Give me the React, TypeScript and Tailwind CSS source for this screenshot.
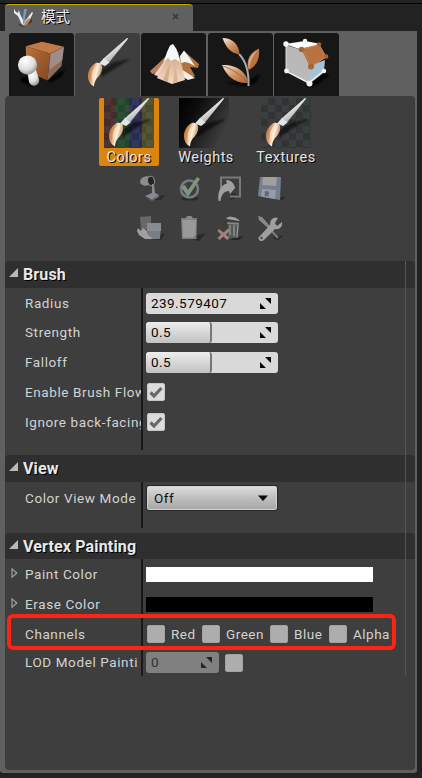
import type { ReactNode } from "react";

function SharedGradients() {
  return (
    <svg className="absolute h-0 w-0" aria-hidden="true">
      <defs>
        <linearGradient id="bristle" x1="0" y1="0.3" x2="1" y2="0.7">
          <stop offset="0" stopColor="#b5713f" />
          <stop offset="0.3" stopColor="#d79b68" />
          <stop offset="0.55" stopColor="#fff0dc" />
          <stop offset="1" stopColor="#a7683a" />
        </linearGradient>
        <linearGradient id="handle" x1="0.3" y1="0.3" x2="0.6" y2="0.7">
          <stop offset="0" stopColor="#ffffff" />
          <stop offset="1" stopColor="#b4b4b4" />
        </linearGradient>
        <linearGradient id="copper" x1="0" y1="0" x2="1" y2="1">
          <stop offset="0" stopColor="#b8733f" />
          <stop offset="1" stopColor="#85461d" />
        </linearGradient>
        <linearGradient id="leaf" x1="0" y1="0" x2="1" y2="1">
          <stop offset="0" stopColor="#fff0df" />
          <stop offset="0.5" stopColor="#cf9468" />
          <stop offset="1" stopColor="#a8622f" />
        </linearGradient>
        <radialGradient id="ball" cx="0.4" cy="0.3" r="0.75">
          <stop offset="0" stopColor="#ffffff" />
          <stop offset="0.6" stopColor="#dedede" />
          <stop offset="1" stopColor="#8e8e8e" />
        </radialGradient>
        <linearGradient id="sand" x1="0" y1="0" x2="0" y2="1">
          <stop offset="0" stopColor="#c99a78" />
          <stop offset="1" stopColor="#f4dcc4" />
        </linearGradient>
        <filter id="soft" x="-30%" y="-30%" width="160%" height="160%">
          <feGaussianBlur stdDeviation="1.2" />
        </filter>
        <pattern id="checker" width="14" height="14" patternUnits="userSpaceOnUse">
          <path d="M0 0h7v7H0zM7 7h7v7H7z" fill="#ffffff" fillOpacity="0.05" />
        </pattern>
        <linearGradient id="weight" x1="0" y1="0" x2="1" y2="0.5">
          <stop offset="0" stopColor="#000000" />
          <stop offset="0.35" stopColor="#0c0c0c" />
          <stop offset="1" stopColor="#3e3e3e" />
        </linearGradient>
      </defs>
    </svg>
  );
}

function BrushDrawing() {
  return (
    <g>
      <path d="M16 33 L29 25 L45 21 L46 22 L31 31 L19 39 Z" fill="#000" opacity="0.55" filter="url(#soft)" />
      <path d="M44 0 L45.3 0.6 L26 24.5 L20.5 20.5 Z" fill="url(#handle)" />
      <path d="M21 20 L26.5 24.5 L22 28 L16 25.5 Z" fill="#e2e5e6" />
      <path d="M14 24.5 C8 27 4.5 33 5 39 C5.5 44 8 47 11 48.5 C11 44 13 41 16 38 C19.5 34 20 29 18 26 Z" fill="url(#bristle)" />
      <path d="M13 28 C8.500 32 8 37 9.500 43 C11 38 16 34 15.500 29 Z" fill="#ffefd9" opacity="0.6" />
    </g>
  );
}

function ModeTab({ active, children, className = "" }: { active?: boolean; children: ReactNode; className?: string }) {
  return (
    <button
      className={`h-[63px] w-[65px] shrink-0 overflow-hidden rounded-t-[3px] ${active ? "bg-[#3e3e3e]" : "bg-[#171717]"} ${className}`}
    >
      {children}
    </button>
  );
}

function ModeTabs() {
  return (
    <div className="flex h-[65px] gap-px pt-[2px] pl-[9px]">
      <ModeTab>
        <svg width="65" height="63" viewBox="9 33 65 63">
          <path d="M48 80 L65 69 L62 76 L50 83 Z M20 78 L36 76 L32 86 L22 82 Z" fill="#000" filter="url(#soft)" />
          <path d="M25.7 46.3 L42 41.7 L64 46.7 L50 53.5 Z" fill="#c07a47" />
          <path d="M25.7 46.3 L50 53.5 L47.5 80.5 L26.5 71 Z" fill="url(#copper)" />
          <path d="M50 53.5 L64 46.7 L61.5 66 L47.5 80.5 Z" fill="#8d6a58" />
          <path d="M50.5 54 L64 47 L62.3 60 L49.5 70 Z" fill="#aba2a8" opacity="0.6" />
          <path d="M27 70 L36 70 L39 79 A5 5 0 0 1 29 82 Z" fill="url(#ball)" />
          <circle cx="27.500" cy="65" r="9.600" fill="url(#ball)" />
        </svg>
      </ModeTab>
      <ModeTab active>
        <svg width="65" height="63" viewBox="-8 -5 65 63">
          <BrushDrawing />
        </svg>
      </ModeTab>
      <ModeTab>
        <svg width="65" height="63" viewBox="141 33 65 63">
          <path d="M150 71 L160 62 L165 57 L170 67 L160 77 L158 73 L152 74 Z" fill="#b98058" />
          <path d="M178 60 L184 51 L199 64 L198 68 L190 67 L195 76 L186 79 L176 72 Z" fill="#b0743f" />
          <path d="M184 50.5 L189 57 L195 66 L189 63 L185 62 L181 63 L180 56 Z" fill="#eef3f5" />
          <path d="M181 69 L195 78 L188 80 L182 76 Z" fill="#efefef" />
          <path d="M166 55 L172 46 L178 52 L182 66 L185 80 L172 84 L157 78 Z" fill="url(#sand)" />
          <path d="M173 44 L176.500 49 L180 62 L175 59 L171 61 L168 58 L164 62 L167 52 L170 45.500 Z" fill="#f4f9fb" />
          <path d="M164 62 L166 61 L158 76 L154 75 Z" fill="#f0cfd0" />
          <path d="M170 63 L168 82 L163 80 Z" fill="#d4ab8d" />
          <path d="M175 62 L178 82 L173 83 Z" fill="#dcb699" />
        </svg>
      </ModeTab>
      <ModeTab className="ml-px">
        <svg width="65" height="63" viewBox="208 33 65 63">
          <path d="M225 83 L246 82 L261 74 L255 83 L244 86 Z" fill="#000" filter="url(#soft)" />
          <path d="M239 54 C246 61 249 72 248.5 86" fill="none" stroke="#a7abaf" strokeWidth="2" />
          <path d="M222.5 38 C232 38 239 44 239.5 54.5 C231 53 226 48 222.5 38 Z" fill="url(#leaf)" />
          <path d="M259 48.5 C249 53 246 61 248.5 70 C257 66 260 58 259 48.5 Z" fill="#b97442" />
          <path d="M258 50 C252 56 250 63 249 69 C247 61 250 54 258 50 Z" fill="#dfab82" />
          <path d="M222 65 C234 64 246 70 248.5 83 C236 84 227 77 222 65 Z" fill="url(#leaf)" />
          <path d="M223 66 C234 70 241 75 247 82" fill="none" stroke="#a66437" strokeWidth="1" />
        </svg>
      </ModeTab>
      <ModeTab>
        <svg width="65" height="63" viewBox="274 33 65 63">
          <path d="M306 86 L326 73 L329 76 L313 87 Z" fill="#000" filter="url(#soft)" />
          <path d="M285 44 L305 41 L321 44 L302 50 Z" fill="#ffffff" />
          <path d="M286 45 L302 50 L310 66 L309 83 L286 70 Z" fill="#b9b9b9" />
          <path d="M309 66 L325 60 L324 71 L309 83 Z" fill="#a5c3d4" />
          <path d="M286 71 L309 83 L324 71" fill="none" stroke="#ececec" strokeWidth="1.8" />
          <path d="M286 45 V71" fill="none" stroke="#dcdcdc" strokeWidth="1" />
          <path d="M302 49 L319 45 L326 57 L311 66 Z" fill="#b97240" stroke="#c5814f" strokeWidth="1.3" />
          <g fill="#f4f4f4">
            <circle cx="286" cy="44" r="2.700" />
            <circle cx="305" cy="41" r="2.200" />
            <circle cx="286.500" cy="71" r="2.400" />
            <circle cx="309.500" cy="83.500" r="3" />
            <circle cx="324" cy="71" r="2.200" />
          </g>
          <g fill="#aa6334">
            <circle cx="301.500" cy="49.500" r="2.800" />
            <circle cx="319" cy="44.500" r="2.200" />
            <circle cx="326" cy="56.500" r="2.300" />
            <circle cx="311" cy="66.500" r="3" />
          </g>
        </svg>
      </ModeTab>
    </div>
  );
}

function PaintMode({ label, selected, children, className = "", labelClass = "" }: { label: string; selected?: boolean; children: ReactNode; className?: string; labelClass?: string }) {
  return (
    <button className={`flex h-[68px] w-[60px] shrink-0 flex-col items-center rounded-[2px] ${selected ? "bg-[#dc850e]" : ""} ${className}`}>
      <svg width="50" height="50" viewBox="0 0 50 50" className="shrink-0">
        {children}
        <BrushDrawing />
      </svg>
      <span className={`pt-px text-[14.5px] leading-[18px] tracking-[0.5px] whitespace-nowrap text-[#e4e4e4] [text-shadow:1px_1px_0_#000] ${labelClass}`}>{label}</span>
    </button>
  );
}

function ActionIcon({ children }: { children: ReactNode }) {
  return (
    <button className="h-[40px] w-[40px]">
      <svg width="40" height="40" viewBox="0 0 40 40">
        {children}
      </svg>
    </button>
  );
}

function PaintActions() {
  return (
    <div className="grid w-[160px] grid-cols-4 content-start">
      <ActionIcon>
        <path d="M20 29 L35 27 L31 32 L25 32 Z" fill="#2c2c2c" />
        <ellipse cx="16" cy="13" rx="6" ry="4.600" fill="#8d8d8d" transform="rotate(-12 16 13)" />
        <ellipse cx="21" cy="13" rx="3.500" ry="4.800" fill="#242424" stroke="#858585" strokeWidth="1.2" transform="rotate(-12 21 13)" />
        <path d="M22 16 H24 L25 25 L29 27 L22 31.500 L15 28 L22 25 Z" fill="#88898f" />
        <path d="M15 28 L22 31.500 L29 27 V29 L22 33 Z" fill="#686d80" />
      </ActionIcon>
      <ActionIcon>
        <ellipse cx="20" cy="30.500" rx="9" ry="2" fill="#292929" />
        <circle cx="19.500" cy="21" r="8.500" fill="none" stroke="#777b80" strokeWidth="2.6" />
        <path d="M11 19 L15 17 L18 22 L27 9 L30 11 L18 29 Z" fill="#81947f" />
      </ActionIcon>
      <ActionIcon>
        <path d="M22 25 L31 28 L20 32 Z" fill="#282828" />
        <path d="M11 21 V9.500 H30 V28.500 H20" fill="none" stroke="#777b7d" strokeWidth="2" />
        <path d="M8.500 33 C7.500 25 10 17 17 15.500 L16 12 C21 12 24 15 25 20 L20 26 L19 23 C14 23 11 27 10.500 33 Z" fill="#a0a0a0" />
      </ActionIcon>
      <ActionIcon>
        <path d="M28 31 L35 28 L33 32 Z" fill="#282828" />
        <path d="M10 9 H31 L30 32 L8 28 Z" fill="#777e92" />
        <path d="M13 9 H27 L26 18 L12 17 Z" fill="#a0a0a0" />
        <path d="M12 21 L26 22 L25 31 L11 28.500 Z" fill="#989ca5" />
        <path d="M15 23 L19 23.500 L18.500 28.500 L14.500 28 Z" fill="#606984" />
      </ActionIcon>
      <ActionIcon>
        <path d="M27 28 L35 25 L31 32 L21 31 Z" fill="#2a2a2a" />
        <path d="M10 9 L21 8 V20 L11 23 Z" fill="#686868" />
        <path d="M17 15 H31 L30 31 H18 Z" fill="#797d85" />
        <path d="M17 15 H31 V23 H17 Z" fill="#888c92" />
        <path d="M8 20 L11 23 L13 20 L17 23 L18 27 L23 31 H15 L9 27 L7 23 Z" fill="#a0a0a0" />
      </ActionIcon>
      <ActionIcon>
        <path d="M25 28 L36 25 L29 33 L22 31 Z" fill="#292929" />
        <path d="M11 10 H27 L26.500 31 H12 Z" fill="#7c7d7c" />
        <path d="M12.500 12 H26 L25.500 27 L23 29.500 H13 Z" fill="#989998" />
        <path d="M16 10 C16 7 22.500 7 22.500 10 V11.500 H16 Z" fill="#888" />
      </ActionIcon>
      <ActionIcon>
        <path d="M24 30 L34 28 L29 32 L20 32 Z" fill="#242424" />
        <path d="M18 14 L29 14 L28 30 H18 Z" fill="#565956" />
        <path d="M16 10 L20 8.500 L25 9.500 L29.500 12 L29 13 L17 11 Z" fill="#a0a0a0" />
        <path d="M17 15 L29 16" stroke="#888" strokeWidth="1.5" />
        <path d="M20 17 V27 M24 17 V28 M28 17 L27 29" stroke="#939693" strokeWidth="1.3" />
        <path d="M9 21 L13.500 24.500 L18 20.500 L20 22.500 L16 26.500 L19.500 30 L17 32 L13.500 28.500 L9.500 32 L7.500 30 L11 26.500 L7.500 23 Z" fill="#a47f7d" />
      </ActionIcon>
      <ActionIcon>
        <path d="M22 30 L34 27 L28 32 Z" fill="#292929" />
        <path d="M8 8 L12 9 L20 18 L18 20 L9 12 Z" fill="#858a91" />
        <path d="M20 21 L28 30" stroke="#7b7b7b" strokeWidth="2" />
        <path d="M9 29 L20 17 C20 11 24 8 28 10 L25 15 L27 18 L32 14 C33 19 29 22 25 21 L14 32 C11 35 7 31 9 29 Z" fill="#9e9f9e" />
        <circle cx="11.500" cy="30" r="1.2" fill="#444" />
      </ActionIcon>
    </div>
  );
}

function SectionHeader({ title, className = "h-[27px]" }: { title: string; className?: string }) {
  return (
    <div className={`flex items-center rounded-t-[4px] bg-[#2f2f2f] pl-1 ${className}`}>
      <svg width="9" height="9" viewBox="0 0 9 9" className="-mt-[4px]">
        <path d="M9 0 V9 H0 Z" fill="#b9b9b9" />
      </svg>
      <h2 className="ml-[5px] pt-px text-[16px] leading-5 font-bold tracking-[0.15px] text-[#e8e8e8] [text-shadow:1px_1px_0_#000]">{title}</h2>
    </div>
  );
}

function Row({ label, children, expandable, height = "h-[30px]", labelPad = "pt-px" }: { label: string; children: ReactNode; expandable?: boolean; height?: string; labelPad?: string }) {
  return (
    <div className={`flex ${height}`}>
      <div className="flex w-[136px] shrink-0 items-center overflow-hidden">
        <span className="w-5 shrink-0 pl-[6px]">
          {expandable && (
            <svg width="7" height="10" viewBox="0 0 7 10" className="-mt-[3px]">
              <path d="M1 0.800 L5.800 5 L1 9.200 Z" fill="none" stroke="#a5a5a5" strokeWidth="1.1" />
            </svg>
          )}
        </span>
        <span className={`text-[13.5px] tracking-[0.6px] whitespace-nowrap text-[#d2d2d2] ${labelPad}`}>{label}</span>
      </div>
      <div className="flex min-w-0 flex-1 items-center border-l-2 border-[#191919] pl-[3px]">{children}</div>
    </div>
  );
}

function SpinBox({ value, filled, disabled }: { value: string; filled?: boolean; disabled?: boolean }) {
  return (
    <div className={`flex h-[21px] items-center overflow-hidden rounded-[3px] ${disabled ? "w-[73px] bg-[#808080] text-[#333]" : "w-[132px] bg-[#d9d9d9] text-[#080808]"}`}>
      <div
        className={`flex h-full shrink-0 items-center pl-[5px] ${disabled ? "w-[55px]" : "w-[66px]"} ${filled ? "rounded-[3px] border-r-2 border-[#777] bg-linear-to-b from-[#ededed] to-[#c2c2c2]" : ""}`}
      >
        <span className={`text-[13.5px] tracking-[0.45px] ${filled || disabled ? "" : "pt-px"}`}>{value}</span>
      </div>
      <svg width="11" height="11" viewBox="0 0 11 11" className={disabled ? "shrink-0" : "ml-[48px] shrink-0"}>
        <path d="M5 0 H11 V6 Z M0 5 L6 11 H0 Z" fill={disabled ? "#252525" : "#080808"} />
      </svg>
    </div>
  );
}

function Check({ checked, className = "" }: { checked?: boolean; className?: string }) {
  return (
    <span className={`flex h-[18px] w-[18px] shrink-0 items-center justify-center rounded-[2px] border ${checked ? "border-[#c5c5c5] bg-[#dcdcdc]" : "border-[#a2a2a2] bg-[#adadad]"} ${className}`}>
      {checked && (
        <svg width="14" height="13" viewBox="0 0 14 13">
          <path d="M1.500 6.500 L5 10 L12.500 2" fill="none" stroke="#686868" strokeWidth="3.2" />
        </svg>
      )}
    </span>
  );
}

function Spacer({ height }: { height: string }) {
  return <div className={`ml-[136px] border-l-2 border-[#191919] ${height}`} />;
}

function Channel({ name, width }: { name: string; width: string }) {
  return (
    <label className={`flex shrink-0 items-center ${width}`}>
      <Check />
      <span className="ml-[6px] pt-px text-[13.5px] tracking-[0.5px] text-[#d2d2d2]">{name}</span>
    </label>
  );
}

export default function App() {
  return (
    <div className="relative flex h-[778px] w-[422px] flex-col overflow-hidden bg-[#222] font-['Roboto','Noto_Sans_CJK_SC',sans-serif]">
      <SharedGradients />
      <div className="h-1 shrink-0 border-b border-black" />
      <div className="ml-[5px] flex h-[27px] w-[188px] shrink-0 items-center rounded-t-[4px] border-t border-[#c9a900] bg-[#606060] pl-[8px]">
        <svg width="21" height="20" viewBox="13 7 21 20">
          <path d="M18 24 L32 18 L32 21 L24 26 Z" fill="#252525" opacity="0.65" />
          <path d="M14 8 L14 12 L18 15 L22 24 L25 23 L20 13 L19 9 L18 12 L16 11 Z" fill="#e6edf2" />
          <path d="M24 8 L27 8 L25 17 L27 22 L23 23 L23 16 Z" fill="#719bc0" />
          <path d="M32 11 L33 12 L30 18 L26 24 L23 25 L26 19 Z" fill="#edf1f4" />
          <path d="M29 17 L31 18 L27 24 L23 25 L26 20 Z" fill="#c58552" />
        </svg>
        <span className="ml-[7px] text-[14.5px] leading-5 text-[#f0f0f0] [text-shadow:1px_1px_0_#000]">模式</span>
        <svg width="7" height="7" viewBox="0 0 7 7" className="mr-[14px] ml-auto -mt-[3px]">
          <path d="M1 1 L6 6 M6 1 L1 6" stroke="#383838" strokeWidth="1.7" />
        </svg>
      </div>
      <main className="flex h-[742px] w-[417px] shrink-0 flex-col rounded-b-[3px] bg-[#606060]">
        <ModeTabs />
        <div className="relative ml-[5px] h-[674px] w-[410px] rounded-[4px] bg-[#3e3e3e]">
          <div className="flex pt-[2px] pl-[94px]">
            <PaintMode label="Colors" selected>
              <path d="M0 0h12v50H0z" fill="#462b2b" />
              <path d="M12 0h13v50H12z" fill="#23452b" />
              <path d="M25 0h13v50H25z" fill="#2a2b52" />
              <path d="M38 0h12v50H38z" fill="#4c4c2c" />
              <path d="M0 0h50v50H0z" fill="url(#checker)" />
            </PaintMode>
            <PaintMode label="Weights" className="ml-[15px]" labelClass="pl-1">
              <path d="M0 0h50v50H0z" fill="url(#weight)" />
            </PaintMode>
            <PaintMode label="Textures" className="ml-[22px]">
              <path d="M0 0h50v50H0z" fill="#303435" />
              <path d="M0 0h50v50H0z" fill="url(#checker)" />
            </PaintMode>
          </div>
          <div className="flex h-[95px] pt-[2px] pl-[125px]">
            <PaintActions />
          </div>
          <section>
            <SectionHeader title="Brush" />
            <Row label="Radius"><SpinBox value="239.579407" /></Row>
            <Row label="Strength" height="h-[29px]" labelPad="pb-px"><SpinBox value="0.5" filled /></Row>
            <Row label="Falloff"><SpinBox value="0.5" filled /></Row>
            <Row label="Enable Brush Flow"><Check checked className="ml-px" /></Row>
            <Row label="Ignore back-facing"><Check checked className="ml-px" /></Row>
            <Spacer height="h-[13px]" />
          </section>
          <section className="mt-[5px]">
            <SectionHeader title="View" />
            <Row label="Color View Mode" height="h-[32px]">
              <div className="flex h-[26px] w-[132px] items-center rounded-[3px] border border-[#272727] bg-linear-to-b from-[#dedede] via-[#bebebe] to-[#a7a7a7] pr-[9px] pl-[7px] text-[13.5px] tracking-[0.45px] text-[#111] shadow-[inset_0_0_0_1px_#d1d1d1]">
                <span className="pt-px">Off</span>
                <svg width="10" height="6" viewBox="0 0 10 6" className="ml-auto">
                  <path d="M0 0.500 H10 L5 6 Z" fill="#080808" />
                </svg>
              </div>
            </Row>
            <Spacer height="h-[14px]" />
          </section>
          <section className="mt-[5px]">
            <SectionHeader title="Vertex Painting" className="h-[26px]" />
            <Row label="Paint Color" expandable><div className="h-[15px] w-[227px] bg-white" /></Row>
            <Row label="Erase Color" expandable><div className="h-[15px] w-[227px] bg-black" /></Row>
            <Row label="Channels">
              <div className="flex pl-px">
                <Channel name="Red" width="w-[55px]" />
                <Channel name="Green" width="w-[68px]" />
                <Channel name="Blue" width="w-[59px]" />
                <Channel name="Alpha" width="w-[62px]" />
              </div>
            </Row>
            <Row label="LOD Model Painti" height="h-[27px]" labelPad="pb-px">
              <SpinBox value="0" disabled />
              <Check className="ml-[6px]" />
            </Row>
          </section>
          <div className="absolute top-[165px] left-[400px] h-[415px] w-px bg-[#555]" />
          <div className="absolute top-[518px] left-[2px] h-[36px] w-[389px] rounded-[6px] border-4 border-[#ff2314]" />
        </div>
      </main>
    </div>
  );
}
